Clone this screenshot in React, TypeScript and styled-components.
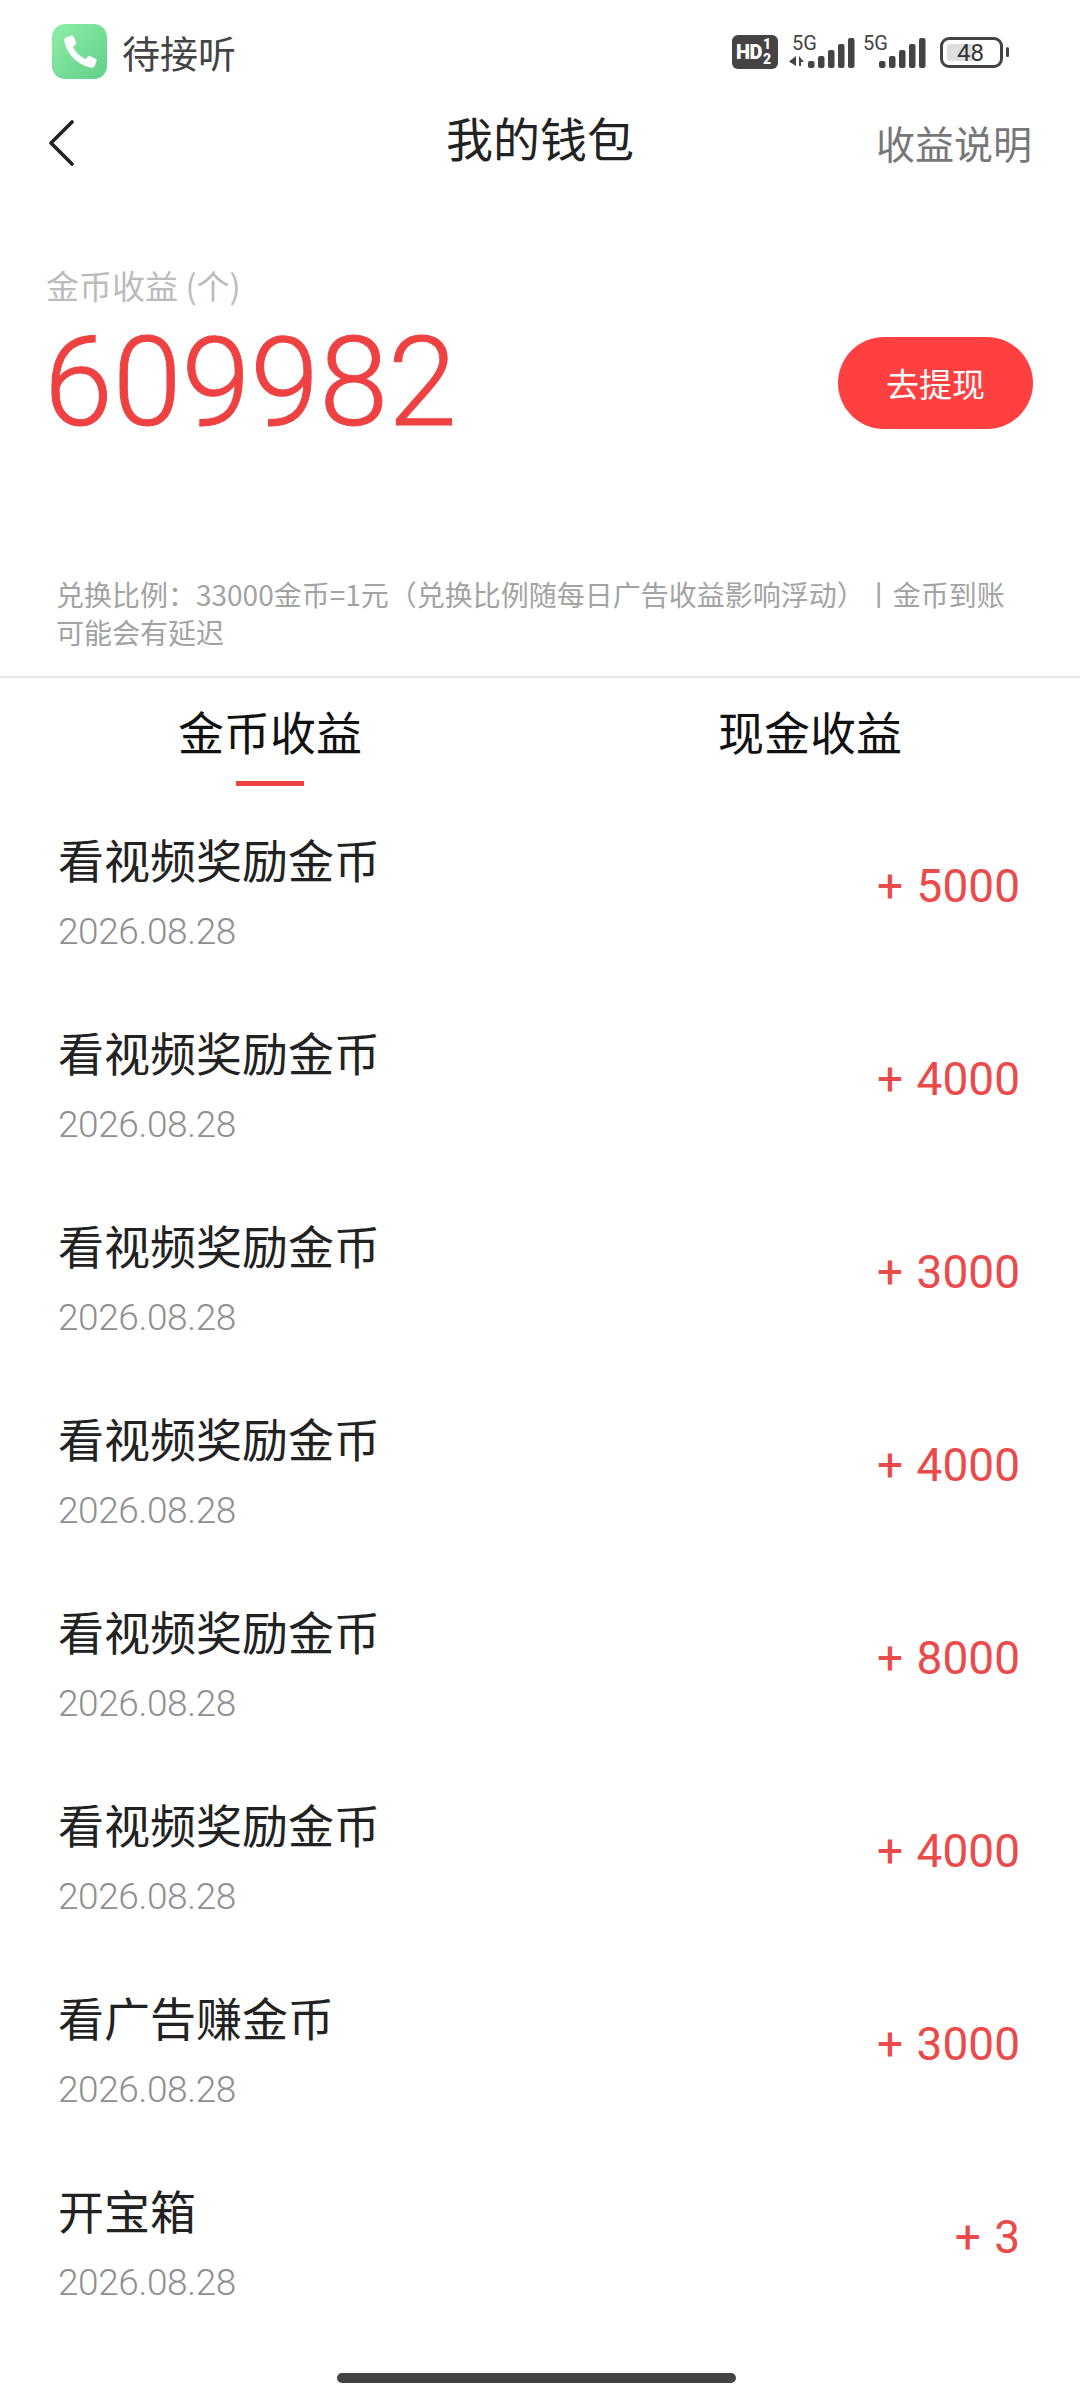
import React from "react";
import styled, { createGlobalStyle } from "styled-components";

const Global = createGlobalStyle`
  html, body { margin: 0; padding: 0; background: #fff; }
  body { font-family: "Noto Sans CJK SC", Roboto, sans-serif; }
  * { box-sizing: border-box; }
`;

const Page = styled.div`
  position: relative;
  width: 1080px;
  height: 2400px;
  overflow: hidden;
  background: #fff;
`;

const StatusBar = styled.header`
  height: 102px;
  padding: 24px 71px 0 52px;
  display: flex;
  justify-content: space-between;
  align-items: flex-start;
`;

const StatusLeft = styled.div`
  display: flex;
  align-items: center;
  gap: 15px;
  height: 55px;
`;

const CallIcon = styled.div`
  width: 55px;
  height: 55px;
  border-radius: 13px;
  background: linear-gradient(135deg, #8eeea6 0%, #62cf8a 100%);
  display: flex;
  align-items: center;
  justify-content: center;
`;

const CallText = styled.span`
  font-size: 38px;
  line-height: 55px;
  color: #444;
`;

const StatusRight = styled.div`
  display: flex;
  align-items: flex-start;
  padding-top: 11px;
`;

const HdBadge = styled.div`
  width: 46px;
  height: 34px;
  border-radius: 6px;
  background: #444;
  color: #fff;
  display: flex;
  align-items: center;
  padding-left: 4px;
  font-family: Roboto, sans-serif;
  font-weight: 900;
  font-size: 20px;
  letter-spacing: -0.5px;
  margin-right: 10px;
`;

const HdFraction = styled.span`
  display: flex;
  flex-direction: column;
  align-items: center;
  font-size: 14px;
  line-height: 15px;
  margin-left: 1px;
`;

const SignalBlock = styled.div<{ $width: number; $gap: number }>`
  position: relative;
  width: ${(p) => p.$width}px;
  height: 34px;
  margin-right: ${(p) => p.$gap}px;
`;

const SignalLabel = styled.span<{ $left: number }>`
  position: absolute;
  left: ${(p) => p.$left}px;
  top: -2px;
  font-family: Roboto, sans-serif;
  font-size: 20px;
  line-height: 20px;
  color: #444;
`;

const Battery = styled.div`
  position: relative;
  width: 63px;
  height: 31px;
  margin-top: 2px;
  border: 3px solid #444;
  border-radius: 9px;
  display: flex;
  align-items: center;
  justify-content: center;
  padding-right: 2px;
`;

const BatteryFill = styled.span`
  position: absolute;
  left: 4px;
  top: 4px;
  bottom: 4px;
  width: 27px;
  background: #dedede;
  border-radius: 2px;
`;

const BatteryText = styled.span`
  position: relative;
  font-family: Roboto, sans-serif;
  font-size: 24px;
  line-height: 24px;
  color: #333;
`;

const BatteryNub = styled.span`
  width: 3px;
  height: 10px;
  margin: 12px 0 0 3px;
  border-radius: 2px;
  background: #444;
`;

const Nav = styled.nav`
  height: 80px;
  padding: 0 48px;
  display: grid;
  grid-template-columns: 1fr auto 1fr;
  align-items: center;
`;

const BackIcon = styled.svg`
  width: 26px;
  height: 46px;
  margin-top: 1px;
`;

const NavTitle = styled.h1`
  margin: -10px 0 0;
  font-size: 47px;
  font-weight: 400;
  line-height: 60px;
  color: #222;
`;

const NavAction = styled.span`
  justify-self: end;
  margin-top: -1px;
  font-size: 39px;
  line-height: 50px;
  color: #777;
`;

const Summary = styled.section`
  padding: 81px 47px 0 44px;
  height: 393px;
`;

const SummaryLabel = styled.div`
  padding-left: 2px;
  font-size: 33px;
  line-height: 44px;
  color: #bbb;
`;

const SummaryRow = styled.div`
  display: flex;
  justify-content: space-between;
  align-items: center;
  margin-top: 10px;
`;

const BigNumber = styled.div`
  font-family: Roboto, sans-serif;
  font-weight: 300;
  font-size: 124px;
  line-height: 132px;
  color: #ee4242;
  -webkit-text-stroke: 1px #ee4242;
`;

const WithdrawButton = styled.button`
  width: 195px;
  height: 92px;
  border: 0;
  border-radius: 46px;
  background: #ff4040;
  color: #fff;
  font-family: inherit;
  font-size: 33px;
`;

const Note = styled.p`
  margin: 0;
  padding: 0 56px;
  height: 103px;
  font-size: 28px;
  line-height: 38px;
  color: #a3a3a3;
  border-bottom: 2px solid #e6e6e6;
`;

const Tabs = styled.div`
  display: grid;
  grid-template-columns: 1fr 1fr;
  height: 112px;
`;

const Tab = styled.div<{ $active?: boolean }>`
  position: relative;
  text-align: center;
  padding-top: 22px;
  font-size: 46px;
  line-height: 60px;
  color: #111;
  &::after {
    content: "";
    display: ${(p) => (p.$active ? "block" : "none")};
    position: absolute;
    left: 50%;
    top: 103px;
    width: 68px;
    height: 5px;
    margin-left: -34px;
    background: #ee4242;
  }
`;

const List = styled.ul`
  margin: 0;
  padding: 0 58px;
  list-style: none;
`;

const Row = styled.li`
  height: 193px;
  display: flex;
  justify-content: space-between;
  align-items: flex-start;
`;

const RowText = styled.div`
  padding-top: 38px;
`;

const RowTitle = styled.div`
  font-size: 46px;
  line-height: 60px;
  color: #222;
`;

const RowDate = styled.div`
  margin-top: 19px;
  font-family: Roboto, sans-serif;
  font-weight: 300;
  font-size: 37px;
  letter-spacing: -0.4px;
  line-height: 50px;
  color: #8f8f8f;
`;

const Amount = styled.div`
  padding: 66px 2px 0 0;
  font-family: Roboto, sans-serif;
  font-weight: 400;
  font-size: 46px;
  line-height: 60px;
  color: #ea4a4a;
  word-spacing: 2px;
`;

const HomeBar = styled.div`
  position: absolute;
  left: 337px;
  top: 2373px;
  width: 399px;
  height: 10px;
  border-radius: 5px;
  background: #444;
`;

const rows = [
  ["看视频奖励金币", "+ 5000"],
  ["看视频奖励金币", "+ 4000"],
  ["看视频奖励金币", "+ 3000"],
  ["看视频奖励金币", "+ 4000"],
  ["看视频奖励金币", "+ 8000"],
  ["看视频奖励金币", "+ 4000"],
  ["看广告赚金币", "+ 3000"],
  ["开宝箱", "+ 3"],
];

const Bars = () => (
  <>
    {[7, 12, 18, 24, 30].map((h, i) => (
      <rect key={i} x={i * 10} y={30 - h} width={6.5} height={h} rx={2} fill="#444" />
    ))}
  </>
);

export default function App() {
  return (
    <Page>
      <Global />
      <StatusBar>
        <StatusLeft>
          <CallIcon>
            <svg width="38" height="38" viewBox="0 0 38 38">
              <path
                d="M5 4.5 L10 2.5 C11 2.2 12 2.6 12.5 3.6 L15 9 C15.4 10 15.2 11 14.4 11.7 L12 13.8 C13.8 18.5 19 24 24.5 26 L26.6 23.7 C27.3 23 28.3 22.8 29.2 23.2 L34.5 25.8 C35.5 26.3 35.9 27.3 35.5 28.3 L33.6 33 C33 34.3 31.8 35 30.4 34.7 C17 32.5 5.5 21 3.2 7.6 C3 6.2 3.7 5 5 4.5 Z"
                fill="#fff"
              />
            </svg>
          </CallIcon>
          <CallText>待接听</CallText>
        </StatusLeft>
        <StatusRight>
          <HdBadge>
            HD
            <HdFraction>
              <span>1</span>
              <span>2</span>
            </HdFraction>
          </HdBadge>
          <SignalBlock $width={68} $gap={7}>
            <SignalLabel $left={4}>5G</SignalLabel>
            <svg width="68" height="34" viewBox="0 0 68 34">
              <path d="M8 21 L8 31 L1 26.5 Z M11 21 L11 31 L13 31 L13 27 L16 27 Z" fill="#444" />
              <g transform="translate(20 3)">
                <Bars />
              </g>
            </svg>
          </SignalBlock>
          <SignalBlock $width={64} $gap={13}>
            <SignalLabel $left={0}>5G</SignalLabel>
            <svg width="64" height="34" viewBox="0 0 64 34">
              <g transform="translate(16 3)">
                <Bars />
              </g>
            </svg>
          </SignalBlock>
          <Battery>
            <BatteryFill />
            <BatteryText>48</BatteryText>
          </Battery>
          <BatteryNub />
        </StatusRight>
      </StatusBar>
      <Nav>
        <BackIcon viewBox="0 0 26 46">
          <path d="M24 2 L3 23 L24 44" fill="none" stroke="#222" strokeWidth="3.6" strokeLinecap="round" strokeLinejoin="round" />
        </BackIcon>
        <NavTitle>我的钱包</NavTitle>
        <NavAction>收益说明</NavAction>
      </Nav>
      <Summary>
        <SummaryLabel>金币收益 (个)</SummaryLabel>
        <SummaryRow>
          <BigNumber>609982</BigNumber>
          <WithdrawButton>去提现</WithdrawButton>
        </SummaryRow>
      </Summary>
      <Note>兑换比例：33000金币=1元（兑换比例随每日广告收益影响浮动）丨金币到账可能会有延迟</Note>
      <Tabs>
        <Tab $active>金币收益</Tab>
        <Tab>现金收益</Tab>
      </Tabs>
      <List>
        {rows.map(([title, amount], i) => (
          <Row key={i}>
            <RowText>
              <RowTitle>{title}</RowTitle>
              <RowDate>2026.08.28</RowDate>
            </RowText>
            <Amount>{amount}</Amount>
          </Row>
        ))}
      </List>
      <HomeBar />
    </Page>
  );
}
